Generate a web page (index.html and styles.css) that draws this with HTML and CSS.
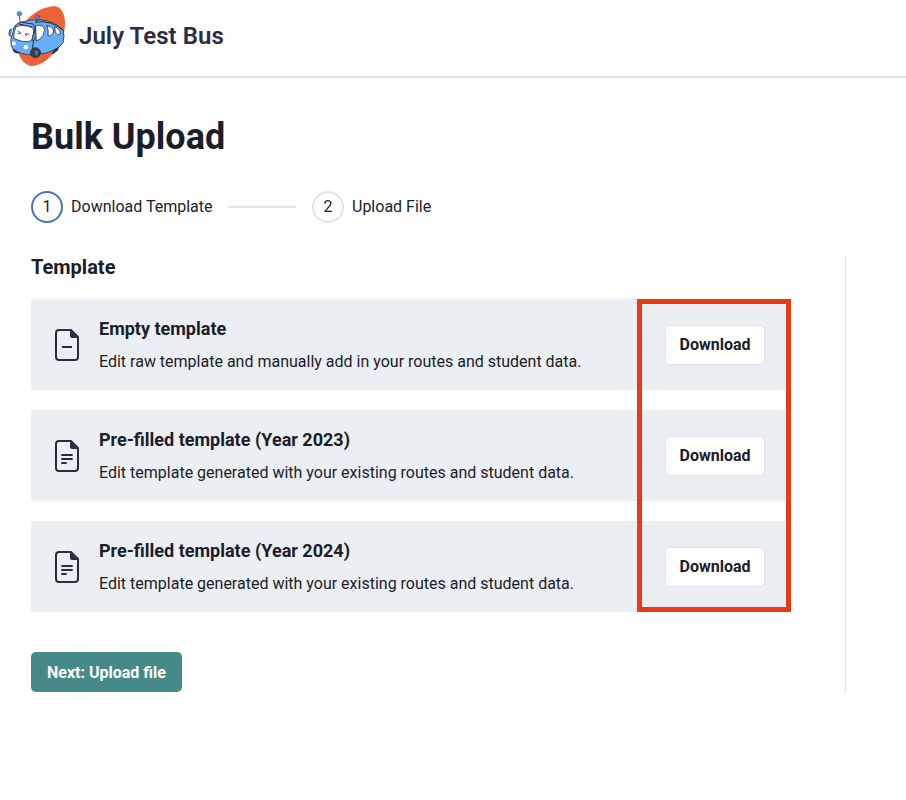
FILE: index.html
```html
<!DOCTYPE html>
<html lang="en">
<head>
<meta charset="utf-8">
<title>Bulk Upload</title>
<link rel="stylesheet" href="styles.css">
</head>
<body>
<svg class="symbols" aria-hidden="true">
  <symbol id="page" viewBox="0 0 26 34">
    <path d="M5 2H17L24 9V29Q24 32 21 32H5Q2 32 2 29V5Q2 2 5 2Z" fill="none" stroke="#2b2c42" stroke-width="2" stroke-linejoin="round"/>
    <path d="M16 2L24 10H18Q16 10 16 8Z" fill="#2b2c42"/>
  </symbol>
</svg>
<header class="header">
  <svg class="logo" viewBox="0 0 64 64" aria-hidden="true">
    <path d="M54 3.500C62 10 62 27 54 41C47 54 36 62 26 62C19 61 12 52 12 40C12 25 24 9 40 4C46 2 51 1.500 54 3.500Z" fill="#ec6239"/>
    <g stroke="#26303f" stroke-width=".8" stroke-linejoin="round" stroke-linecap="round">
      <path d="M48 49L54 41L52 46L49 48Z" fill="#35404c" stroke-width="2"/>
      <path d="M9 45L13 48L10 47Z" fill="#35404c" stroke-width="3"/>
      <path d="M9 23Q12 18 17 18Q25 15 36 16Q49 17 58 26Q60 32 58 39L54 43L47 47L41 49L29 51Q16 51 8 45Q5 42 6 35L8 28Z" fill="#68adf8"/>
      <path d="M15 18L28 20L30 24L27 49M14 20L27 23M31 18Q46 16 58 26" fill="none" stroke-width="1"/>
      <path d="M11 22.500Q19 20 28 24Q30 32 26 37Q17 39 8.500 34Q9 27 11 22.500Z" fill="#fff"/>
      <path d="M7 25Q4 25 4 29Q4 33 6 32M29 28Q27 32 27 36Q29 38 31 34" fill="#568ed2"/>
      <path d="M13 27L16 29L13 29.500M24 30L20 30L22 32" fill="none" stroke-width=".8"/>
      <path d="M31 21.500Q39 20 39.500 26Q39 32 35 35L31.500 37Z" fill="#fff"/>
      <path d="M42 22Q48 22 48.500 27Q48 32 43 32Q44 27 42 22Z" fill="#fff"/>
      <path d="M50 23Q55 24 55.500 30Q52 32 50.500 29Z" fill="#fff"/>
      <path d="M15 17L14.500 12M31 19L32 15" fill="none"/>
      <circle cx="14.300" cy="9.700" r="2.300" fill="#568ed2" stroke-width=".4"/>
      <circle cx="32.300" cy="13" r="2.100" fill="#568ed2" stroke-width=".4"/>
      <circle cx="30.500" cy="48.700" r="5" fill="#35404c"/>
      <ellipse cx="31.500" cy="48.700" rx="2" ry="2.500" fill="#66778a" stroke-width=".4"/>
    </g>
    <circle cx="8.700" cy="39.500" r="2.100" fill="#fff"/>
    <circle cx="21" cy="43.300" r="2.300" fill="#fff"/>
  </svg>
  <span class="org">July Test Bus</span>
</header>
<main class="main">
  <h1 class="title">Bulk Upload</h1>
  <div class="steps">
    <span class="step-number active">1</span><span class="step-label first">Download Template</span>
    <span class="step-line"></span>
    <span class="step-number">2</span><span class="step-label">Upload File</span>
  </div>
  <div class="content">
    <h2 class="subtitle">Template</h2>
    <div class="templates">
      <section class="card">
        <svg class="icon" viewBox="0 0 26 34"><use href="#page"/><path d="M8 19H18" stroke="#2b2c42" stroke-width="2"/></svg>
        <div class="info"><h3>Empty template</h3><p>Edit raw template and manually add in your routes and student data.</p></div>
        <button class="download">Download</button>
      </section>
      <section class="card">
        <svg class="icon" viewBox="0 0 26 34"><use href="#page"/><path d="M7.300 16H18.700M7.300 20H18.700M7.300 24H12.700" stroke="#2b2c42" stroke-width="2"/></svg>
        <div class="info"><h3>Pre-filled template (Year 2023)</h3><p>Edit template generated with your existing routes and student data.</p></div>
        <button class="download">Download</button>
      </section>
      <section class="card">
        <svg class="icon" viewBox="0 0 26 34"><use href="#page"/><path d="M7.300 16H18.700M7.300 20H18.700M7.300 24H12.700" stroke="#2b2c42" stroke-width="2"/></svg>
        <div class="info"><h3>Pre-filled template (Year 2024)</h3><p>Edit template generated with your existing routes and student data.</p></div>
        <button class="download">Download</button>
      </section>
      <div class="highlight"></div>
    </div>
    <button class="next">Next: Upload file</button>
  </div>
</main>
</body>
</html>
```
FILE: styles.css
```css
* { box-sizing: border-box; }
body { margin: 0; background: #fff; color: #1b1d29; font: 16px/24px Roboto, sans-serif; }
h1, h2, h3, p { margin: 0; }
button { font: 700 16px/24px Roboto, sans-serif; color: #1b1d29; padding: 0; }
.symbols { display: none; }
.header { height: 78px; border-bottom: 2px solid #dfe3ec; display: flex; align-items: flex-start; padding: 4px 5px; }
.logo { width: 64px; height: 64px; }
.org { margin: 16px 0 0 10px; font-size: 24px; line-height: 32px; font-weight: 600; letter-spacing: .05px; color: #2b2c42; }
.main { padding: 35px 0 0 31px; }
.title { font-size: 36px; line-height: 48px; font-weight: 700; }
.steps { display: flex; align-items: center; height: 32px; margin-top: 30px; }
.step-number { width: 32px; height: 32px; border: 2px solid #dfe3ef; border-radius: 50%; text-align: center; line-height: 28px; }
.step-number.active { border-color: #4770c9; }
.step-label { margin-left: 8px; }
.step-label.first { width: 141px; white-space: nowrap; }
.step-line { width: 68px; height: 2px; background: #dfe3ef; margin: 0 16px; }
.content { width: 815px; height: 437px; margin-top: 32px; padding-right: 60px; border-right: 1px solid #dfe3ec; }
.subtitle { font-size: 20px; line-height: 24px; }
.templates { position: relative; display: grid; gap: 20px; margin-top: 20px; }
.card { height: 91px; background: #ebeef3; display: flex; align-items: center; padding: 0 20px 0 23px; }
.icon { width: 26px; height: 34px; margin-top: 1px; }
.info { flex: 1; margin-left: 19px; height: 59px; }
.info h3 { font-size: 18px; line-height: 28px; }
.info p { margin-top: 7px; line-height: 24px; }
.download { width: 100px; height: 40px; border: 1px solid #dfe3ef; border-radius: 5px; background: #fff; }
.highlight { position: absolute; left: 606px; top: 0; width: 154px; height: 313px; border: 5px solid #e93a16; }
.next { width: 151px; height: 40px; margin-top: 40px; padding-top: 2px; border: 0; border-radius: 5px; background: #458a88; color: #fff; }
```
